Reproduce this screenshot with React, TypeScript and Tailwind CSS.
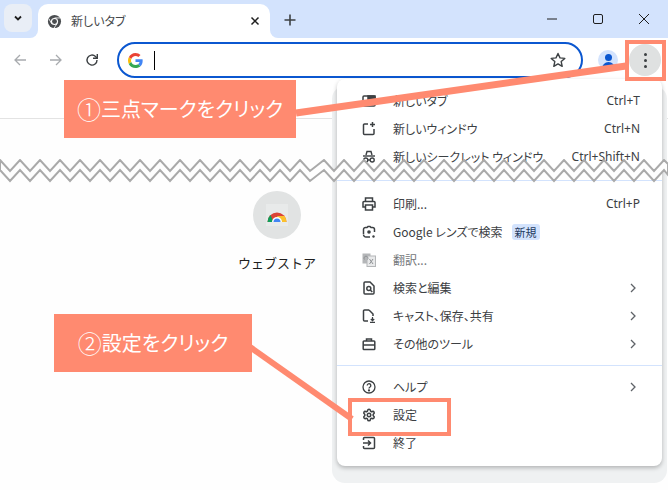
import React from "react"
import { Settings } from "lucide-react"

const icon = "w-[14px] h-[14px] text-[#3c4043]"

const NewTabIcon = () => (
  <svg viewBox="0 0 14 14" className={icon} fill="none" stroke="currentColor" strokeWidth="1.5">
    <rect x="1" y="2" width="12" height="10" rx="1" />
    <rect x="6" y="2" width="7" height="4" fill="currentColor" />
  </svg>
)
const NewWindowIcon = () => (
  <svg viewBox="0 0 14 14" className={icon} fill="none" stroke="currentColor" strokeWidth="1.5">
    <path d="M6 2H2.5a1 1 0 0 0-1 1v8.500a1 1 0 0 0 1 1H11a1 1 0 0 0 1-1V7" />
    <path d="M10.500 0v5M8 2.500h5" />
  </svg>
)
const IncognitoIcon = () => (
  <svg viewBox="0 0 14 14" className={icon} fill="none" stroke="currentColor" strokeWidth="1.400">
    <path d="M4 5l1-3.500h4L10 5" />
    <path d="M1 6h12" />
    <circle cx="3.800" cy="10" r="2" />
    <circle cx="10.200" cy="10" r="2" />
    <path d="M5.800 10h2.400" />
  </svg>
)
const PrintIcon = () => (
  <svg viewBox="0 0 14 14" className={icon} fill="none" stroke="currentColor" strokeWidth="1.500">
    <path d="M3.500 4V1h7v3" />
    <path d="M3.500 10H1V5.500a1 1 0 0 1 1-1h10a1 1 0 0 1 1 1V10h-2.500" />
    <rect x="3.500" y="8" width="7" height="5" />
  </svg>
)
const LensIcon = () => (
  <svg viewBox="0 0 14 14" className={icon} fill="none" stroke="currentColor" strokeWidth="1.500">
    <path d="M1.500 9V4.500a2 2 0 0 1 2-2h1.500l1-1h2l1 1h1.500a2 2 0 0 1 2 2V7" />
    <path d="M1.500 9.500a2.500 2.500 0 0 0 2.500 2.500h4" />
    <circle cx="7" cy="7" r="1.800" fill="currentColor" stroke="none" />
    <circle cx="11.500" cy="11.500" r="1.200" fill="currentColor" stroke="none" />
  </svg>
)
const TranslateIcon = () => (
  <svg viewBox="0 0 14 14" className="w-[14px] h-[14px]">
    <rect x="0.500" y="0.500" width="8" height="10" fill="#b4b6b8" />
    <rect x="5" y="3" width="8.500" height="10.500" fill="#e8e9ea" stroke="#b4b6b8" />
    <path d="M2.500 6.500a2 2 0 1 1 3 0M7.500 6l3.500 5M11 6l-3.500 5" fill="none" stroke="#8f9295" strokeWidth="1" />
  </svg>
)
const SearchEditIcon = () => (
  <svg viewBox="0 0 14 14" className={icon} fill="none" stroke="currentColor" strokeWidth="1.500">
    <path d="M8 1H3a1 1 0 0 0-1 1v10a1 1 0 0 0 1 1h8a1 1 0 0 0 1-1V5z" />
    <circle cx="6.800" cy="7.500" r="2" />
    <path d="M8.300 9l2 2" />
  </svg>
)
const CastIcon = () => (
  <svg viewBox="0 0 14 14" className={icon} fill="none" stroke="currentColor" strokeWidth="1.500">
    <path d="M7 1H2.500a1 1 0 0 0-1 1v9a1 1 0 0 0 1 1H6" />
    <path d="M7 1l4 4v2" />
    <path d="M10.500 8v3.500M8.800 10l1.700 1.700 1.700-1.700M8 13.300h5" strokeWidth="1.200" />
  </svg>
)
const ToolsIcon = () => (
  <svg viewBox="0 0 14 14" className={icon} fill="none" stroke="currentColor" strokeWidth="1.500">
    <path d="M4.500 4V2h5v2" />
    <rect x="1.200" y="4" width="11.600" height="8.500" rx="0.800" />
    <path d="M1.200 8h11.600" />
  </svg>
)
const HelpIcon = () => (
  <svg viewBox="0 0 14 14" className={icon} fill="none" stroke="currentColor" strokeWidth="1.300">
    <circle cx="7" cy="7" r="6" />
    <path d="M5.200 5.500a1.800 1.800 0 1 1 2.800 1.500c-.7.400-1 .8-1 1.500" />
    <circle cx="7" cy="10.400" r="0.500" fill="currentColor" />
  </svg>
)
const ExitIcon = () => (
  <svg viewBox="0 0 14 14" className={icon} fill="none" stroke="currentColor" strokeWidth="1.500">
    <path d="M1.500 4V2.500a1 1 0 0 1 1-1h9a1 1 0 0 1 1 1v9a1 1 0 0 1-1 1h-9a1 1 0 0 1-1-1V10" />
    <path d="M1 7h7M6 4.500L8.500 7 6 9.500" />
  </svg>
)

const Chevron = () => (
  <svg viewBox="0 0 10 10" className="w-[10px] h-[10px] mr-[2px] text-[#5f6368]" fill="none" stroke="currentColor" strokeWidth="1.300">
    <path d="M3 1l4 4-4 4" />
  </svg>
)

const MenuRow = ({ icon, label, shortcut, arrow, badge, muted }: { icon: React.ReactNode; label: string; shortcut?: string; arrow?: boolean; badge?: string; muted?: boolean }) => (
  <div className="h-[28px] flex items-center pl-[25px] pr-[22px]">
    <div className="w-[31px] shrink-0">{icon}</div>
    <span className={"text-[12px] [font-feature-settings:'palt'] " + (muted ? "text-[#74777a]" : "text-[#3c4043]")}>{label}</span>
    {badge && <span className="ml-[9px] px-[3px] h-[16px] leading-[16px] rounded-[3px] bg-[#d3e3fd] text-[#1f3a5f] text-[11px]">{badge}</span>}
    <span className="ml-auto text-[12px] text-[#3c4043] font-['Noto_Sans',sans-serif]">{shortcut}</span>
    {arrow && <Chevron />}
  </div>
)

const App = () => {
  return (
    <div className="relative w-[668px] h-[490px] overflow-hidden bg-[#fefefe] font-['Noto_Sans_CJK_JP','Noto_Sans',sans-serif]">
      {/* tab strip */}
      <div className="h-[38px] bg-[#d3e3fd] flex items-end pl-[4px]">
        <div className="w-[28px] h-[28px] mb-[6px] rounded-lg bg-[#e9eef6] flex items-center justify-center">
          <svg viewBox="0 0 10 10" className="w-[10px] h-[10px]" fill="none" stroke="#1f1f1f" strokeWidth="1.800">
            <path d="M2 3.500L5 6.500 8 3.500" />
          </svg>
        </div>
        <div className="relative ml-[6px] w-[232px] h-[34px] bg-white rounded-t-[10px] flex items-center pl-[9px] pr-[10px]">
          <div className="absolute bottom-0 -left-[8px] w-[8px] h-[8px] bg-white">
            <div className="w-full h-full bg-[#d3e3fd] rounded-br-[8px]" />
          </div>
          <div className="absolute bottom-0 -right-[8px] w-[8px] h-[8px] bg-white">
            <div className="w-full h-full bg-[#d3e3fd] rounded-bl-[8px]" />
          </div>
          <svg viewBox="0 0 16 16" className="w-[15px] h-[15px]">
            <circle cx="8" cy="8" r="7" fill="#4a4d50" />
            <circle cx="8" cy="8" r="3.800" fill="#fff" />
            <circle cx="8" cy="8" r="2.600" fill="#4a4d50" />
            <path d="M8 4.200h6.200M5 10.500L2 5M10.800 10.200L7.500 15" stroke="#fff" strokeWidth="0.900" />
          </svg>
          <span className="ml-[9px] text-[12px] text-[#45484b] [font-feature-settings:'palt']">新しいタブ</span>
          <svg viewBox="0 0 10 10" className="ml-auto w-[10px] h-[10px]" fill="none" stroke="#1f1f1f" strokeWidth="1.500">
            <path d="M1.500 1.500l7 7M8.500 1.500l-7 7" />
          </svg>
        </div>
        <svg viewBox="0 0 12 12" className="ml-[14px] mb-[12px] w-[12px] h-[12px]" fill="none" stroke="#3c4043" strokeWidth="1.600">
          <path d="M6 .5v11M.5 6h11" />
        </svg>
        <div className="ml-auto h-full flex items-center">
          <svg viewBox="0 0 10 10" className="w-[10px] h-[10px] mr-[36px]" fill="none" stroke="#1f1f1f" strokeWidth="1">
            <path d="M0 5h10" />
          </svg>
          <svg viewBox="0 0 10 10" className="w-[10px] h-[10px] mr-[36px]" fill="none" stroke="#1f1f1f" strokeWidth="1">
            <rect x="0.500" y="0.500" width="9" height="9" rx="1.500" />
          </svg>
          <svg viewBox="0 0 10 10" className="w-[10px] h-[10px] mr-[19px]" fill="none" stroke="#1f1f1f" strokeWidth="1">
            <path d="M0 0l10 10M10 0L0 10" />
          </svg>
        </div>
      </div>

      {/* toolbar */}
      <div className="h-[44px] bg-white flex items-center pl-[14px] pr-[7px]">
        <svg viewBox="0 0 12 12" className="w-[12px] h-[12px]" fill="none" stroke="#a8abae" strokeWidth="1.300">
          <path d="M12 6H1M6 1L1 6l5 5" />
        </svg>
        <svg viewBox="0 0 12 12" className="ml-[24px] w-[12px] h-[12px]" fill="none" stroke="#a8abae" strokeWidth="1.300">
          <path d="M0 6h11M6 1l5 5-5 5" />
        </svg>
        <svg viewBox="0 0 14 14" className="ml-[23px] w-[14px] h-[14px]" fill="none" stroke="#3c4043" strokeWidth="1.400">
          <path d="M12 7a5 5 0 1 1-1.500-3.500L12 5" />
          <path d="M12.300 1v4.300H8" />
        </svg>
        <div className="ml-[18px] w-[466px] h-[36px] rounded-full border-2 border-[#0b57d0] flex items-center pl-[9px] pr-[15px] shrink-0">
          <svg viewBox="0 0 48 48" className="w-[15px] h-[15px]">
            <path fill="#EA4335" d="M24 9.500c3.500 0 6.700 1.200 9.200 3.600l6.900-6.900C35.900 2.400 30.500 0 24 0 14.600 0 6.500 5.400 2.600 13.200l8 6.200C12.400 13.700 17.700 9.500 24 9.500z" />
            <path fill="#4285F4" d="M46.900 24.500c0-1.600-.1-3.100-.4-4.500H24v9h12.900c-.6 3-2.200 5.500-4.800 7.200l7.700 6c4.500-4.200 7.100-10.300 7.100-17.700z" />
            <path fill="#FBBC05" d="M10.500 28.600c-.5-1.400-.8-3-.8-4.600s.3-3.200.8-4.600l-8-6.200C.9 16.500 0 20.100 0 24s.9 7.500 2.600 10.800l7.900-6.200z" />
            <path fill="#34A853" d="M24 48c6.500 0 11.900-2.100 15.900-5.800l-7.700-6c-2.100 1.400-4.900 2.300-8.200 2.300-6.300 0-11.600-4.200-13.500-9.900l-8 6.200C6.500 42.600 14.600 48 24 48z" />
          </svg>
          <div className="ml-[11px] w-px h-[19px] bg-black" />
          <svg viewBox="0 0 16 16" className="ml-auto w-[16px] h-[16px]" fill="none" stroke="#3c4043" strokeWidth="1.400">
            <path d="M8 1.500l2 4.400 4.800.5-3.600 3.200 1 4.700L8 11.900l-4.200 2.400 1-4.700-3.600-3.200 4.800-.5z" strokeLinejoin="round" />
          </svg>
        </div>
        <div className="ml-[15px] w-[20px] h-[20px] rounded-full bg-[#d3e3fd] overflow-hidden relative shrink-0">
          <div className="mx-auto mt-[4px] w-[7px] h-[7px] rounded-full bg-[#0b57d0]" />
          <div className="mx-auto mt-[1px] w-[13px] h-[8px] rounded-t-full bg-[#0b57d0]" />
        </div>
        <div className="ml-auto w-[32px] h-[32px] rounded-full bg-[#dfe1e1] flex flex-col items-center justify-center gap-[3px] shrink-0">
          <div className="w-[3px] h-[3px] rounded-full bg-[#3c4043]" />
          <div className="w-[3px] h-[3px] rounded-full bg-[#3c4043]" />
          <div className="w-[3px] h-[3px] rounded-full bg-[#3c4043]" />
        </div>
      </div>

      {/* bookmark bar area */}
      <div className="h-[37px] border-b border-[#e3e3e3] bg-white" />

      {/* page */}
      <div className="pt-[72px] pl-[237px] w-[80px] flex flex-col items-center box-content">
        <div className="w-[48px] h-[48px] rounded-full bg-[#e1e3e3] flex items-center justify-center">
          <svg viewBox="0 0 22 22" className="w-[22px] h-[22px]">
            <rect width="22" height="22" fill="#e8eaea" />
            <path d="M1.500 18a9.500 9.500 0 0 1 19 0z" fill="#db4437" />
            <path d="M1.500 18a9.500 9.500 0 0 1 3-7l3 7z" fill="#0f9d58" />
            <path d="M20.500 18a9.500 9.500 0 0 0-2-6H11l3 6z" fill="#fbc02d" />
            <circle cx="11" cy="18" r="5" fill="#fff" />
            <circle cx="11" cy="18" r="3.500" fill="#4285f4" />
            <rect y="18" width="22" height="4" fill="#e8eaea" />
          </svg>
        </div>
        <span className="mt-[14px] text-[13px] leading-[20px] text-[#1f1f1f] whitespace-nowrap">ウェブストア</span>
      </div>

      {/* chrome menu */}
      <div className="absolute left-[337px] top-[79px] w-[325px] h-[387px] bg-white rounded-[8px] shadow-[0_2px_4px_rgba(0,0,0,0.25),0_12px_0_5px_#eff1f2] pt-[8px]">
        <MenuRow icon={<NewTabIcon />} label="新しいタブ" shortcut="Ctrl+T" />
        <MenuRow icon={<NewWindowIcon />} label="新しいウィンドウ" shortcut="Ctrl+N" />
        <MenuRow icon={<IncognitoIcon />} label="新しいシークレット ウィンドウ" shortcut="Ctrl+Shift+N" />
        <div className="mt-[9px] mb-[9px] h-px bg-[#d3e3fd]" />
        <MenuRow icon={<PrintIcon />} label="印刷..." shortcut="Ctrl+P" />
        <MenuRow icon={<LensIcon />} label="Google レンズで検索" badge="新規" />
        <MenuRow icon={<TranslateIcon />} label="翻訳..." muted />
        <MenuRow icon={<SearchEditIcon />} label="検索と編集" arrow />
        <MenuRow icon={<CastIcon />} label="キャスト、保存、共有" arrow />
        <MenuRow icon={<ToolsIcon />} label="その他のツール" arrow />
        <div className="mt-[7px] mb-[7px] h-px bg-[#d3e3fd]" />
        <MenuRow icon={<HelpIcon />} label="ヘルプ" arrow />
        <MenuRow icon={<Settings className={icon} strokeWidth={2.6} />} label="設定" />
        <MenuRow icon={<ExitIcon />} label="終了" />
      </div>

      {/* torn edge */}
      <svg viewBox="0 0 668 24" className="absolute left-0 top-[159px] w-[668px] h-[24px]">
        <path
          d="M0 1 L10 12 L20 1 L30 12 L40 1 L50 12 L60 1 L70 12 L80 1 L90 12 L100 1 L110 12 L120 1 L130 12 L140 1 L150 12 L160 1 L170 12 L180 1 L190 12 L200 1 L210 12 L220 1 L230 12 L240 1 L250 12 L260 1 L270 12 L280 1 L290 12 L300 1 L310 12 L324 1 L334 12 L344 1 L354 12 L364 1 L374 12 L384 1 L394 12 L404 1 L414 12 L424 1 L434 12 L444 1 L454 12 L464 1 L474 12 L484 1 L494 12 L504 1 L514 12 L524 1 L534 12 L544 1 L554 12 L564 1 L574 12 L584 1 L594 12 L604 1 L614 12 L624 1 L634 12 L644 1 L654 12 L664 1 L668 5 L668 16 L664 11 L654 22 L644 11 L634 22 L624 11 L614 22 L604 11 L594 22 L584 11 L574 22 L564 11 L554 22 L544 11 L534 22 L524 11 L514 22 L504 11 L494 22 L484 11 L474 22 L464 11 L454 22 L444 11 L434 22 L424 11 L414 22 L404 11 L394 22 L384 11 L374 22 L364 11 L354 22 L344 11 L334 22 L324 11 L310 22 L300 11 L290 22 L280 11 L270 22 L260 11 L250 22 L240 11 L230 22 L220 11 L210 22 L200 11 L190 22 L180 11 L170 22 L160 11 L150 22 L140 11 L130 22 L120 11 L110 22 L100 11 L90 22 L80 11 L70 22 L60 11 L50 22 L40 11 L30 22 L20 11 L10 22 L0 11 Z"
          fill="#fefefe"
          stroke="#aaaaaa"
          strokeWidth="2"
        />
      </svg>

      {/* annotations */}
      <svg viewBox="0 0 668 490" className="absolute inset-0 w-[668px] h-[490px] pointer-events-none">
        <path d="M296 113L626 66" stroke="#ff8a70" strokeWidth="7" />
        <path d="M250 347L352 419" stroke="#ff8a70" strokeWidth="6" />
      </svg>
      <div className="absolute left-[625px] top-[40px] w-[41px] h-[41px] border-[4px] border-[#ff8a70]" />
      <div className="absolute left-[348px] top-[398px] w-[103px] h-[38px] border-[4px] border-[#ff8a70]" />
      <div className="absolute left-[64px] top-[80px] w-[232px] h-[58px] bg-[#ff8a70] flex items-center justify-center text-white text-[20px] whitespace-nowrap [font-feature-settings:'palt']">
        <span className="text-[24px] font-light [font-feature-settings:'normal']">①</span>三点マークをクリック
      </div>
      <div className="absolute left-[54px] top-[314px] w-[198px] h-[58px] bg-[#ff8a70] flex items-center justify-center text-white text-[20px] whitespace-nowrap [font-feature-settings:'palt']">
        <span className="text-[24px] font-light [font-feature-settings:'normal']">②</span>設定をクリック
      </div>
    </div>
  )
}

export default App
